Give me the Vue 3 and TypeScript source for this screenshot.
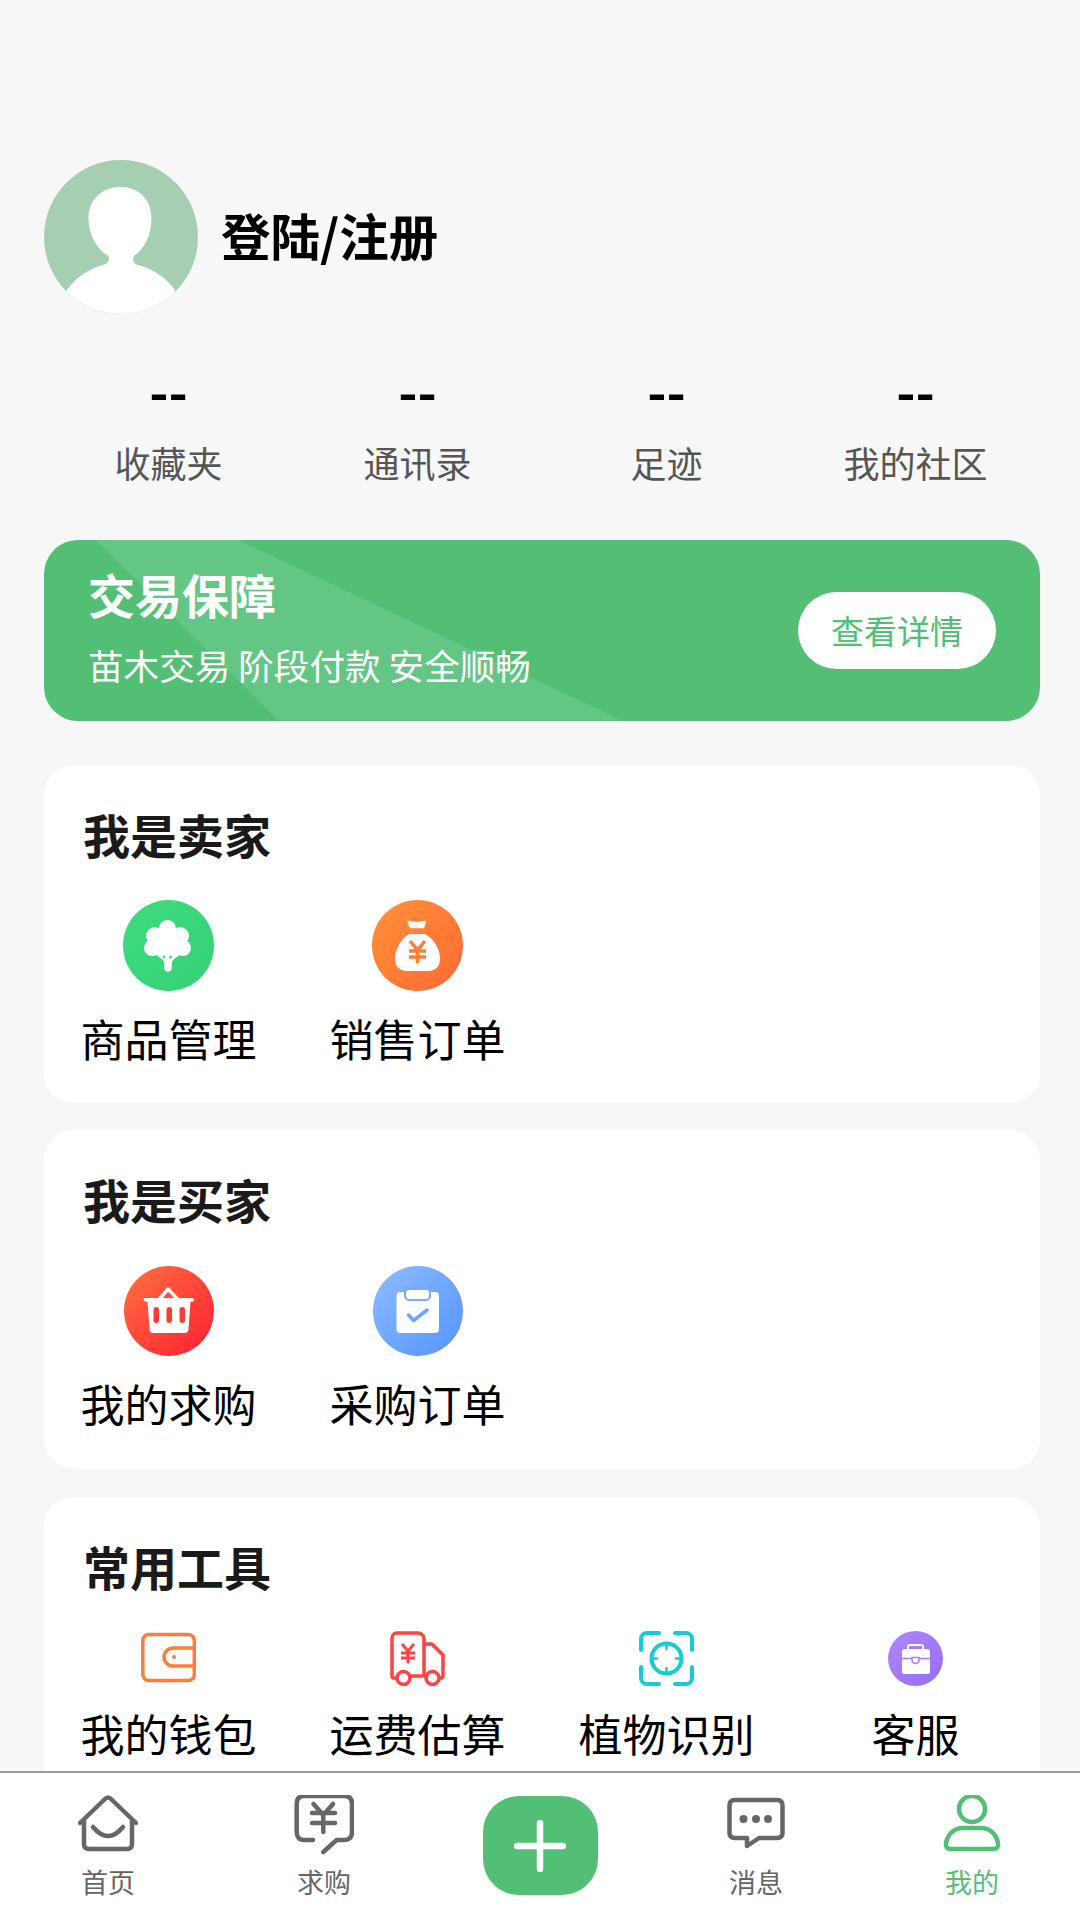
<script setup lang="ts">
const stats: string[] = ['收藏夹', '通讯录', '足迹', '我的社区']
</script>

<template>
  <div class="page">
    <main class="content">
      <section class="profile">
        <div class="avatar">
          <svg width="154" height="154" viewBox="0 0 149 154" preserveAspectRatio="none">
            <path fill="#fff" d="M74 27C56 27 43 40 43 58C43 74 50 88 62 96C64 100 62 104 57 105C42 109 31 118 22 130L30 154H120L127 130C118 118 106 109 91 105C87 104 85 100 87 96C98 88 104 74 104 58C104 40 92 27 74 27Z" />
          </svg>
        </div>
        <div class="login">登陆/注册</div>
      </section>

      <section class="stats">
        <div v-for="s in stats" :key="s" class="stat">
          <div class="stat-value">--</div>
          <div class="stat-label">{{ s }}</div>
        </div>
      </section>

      <section class="banner">
        <div class="banner-text">
          <div class="banner-title">交易保障</div>
          <div class="banner-sub">苗木交易 阶段付款 安全顺畅</div>
        </div>
        <div class="banner-btn">查看详情</div>
      </section>

      <section class="card">
        <h2 class="card-title">我是卖家</h2>
        <div class="grid">
          <div class="cell">
            <svg class="icon-lg" viewBox="0 0 91 91">
              <defs><linearGradient id="g1" x1="0" y1="0" x2="1" y2="1"><stop offset="0" stop-color="#3FDB7E" /><stop offset="1" stop-color="#34D176" /></linearGradient></defs>
              <circle cx="45.5" cy="45.5" r="45.5" fill="url(#g1)" />
              <g fill="#fff">
                <circle cx="44.5" cy="28.5" r="8.5" /><circle cx="32" cy="36" r="9" /><circle cx="57" cy="36" r="9" />
                <circle cx="29" cy="48" r="8" /><circle cx="60" cy="48" r="8" /><circle cx="45" cy="44" r="14" />
                <path d="M30 52H60C56 57 50 58 49 62L48.500 70Q45 74 41.500 70L41 62C40 58 34 57 30 52Z" />
              </g>
              <circle cx="41" cy="57" r="1.500" fill="#3FDB7E" /><circle cx="47.500" cy="57" r="1.500" fill="#3FDB7E" />
            </svg>
            <div class="cell-label">商品管理</div>
          </div>
          <div class="cell">
            <svg class="icon-lg" viewBox="0 0 91 91">
              <defs><linearGradient id="g2" x1="0" y1="0" x2="1" y2="1"><stop offset="0" stop-color="#FF9138" /><stop offset="1" stop-color="#FF6A33" /></linearGradient></defs>
              <circle cx="45.500" cy="45.500" r="45.500" fill="url(#g2)" />
              <path fill="#fff" stroke="#fff" stroke-width="1.500" stroke-linejoin="round" d="M36 21.500Q45 23.500 53.500 21.500L51.500 27.500H38.500Z" />
              <path fill="#fff" d="M37 34H53C62 39 68 49 68 59C68 67 63 71 56 71H35C28 71 23 67 23 59C23 49 29 39 37 34Z" />
              <path fill="none" stroke="#FF7C35" stroke-width="3.500" d="M38 41L45.500 50L53 41M37 51H54M37 57H54M45.500 50V63" />
            </svg>
            <div class="cell-label">销售订单</div>
          </div>
        </div>
      </section>

      <section class="card card-buyer">
        <h2 class="card-title">我是买家</h2>
        <div class="grid">
          <div class="cell">
            <svg class="icon-lg" viewBox="0 0 91 91">
              <defs><linearGradient id="g3" x1="0" y1="0" x2="1" y2="1"><stop offset="0" stop-color="#FF7040" /><stop offset="1" stop-color="#FF1F33" /></linearGradient></defs>
              <circle cx="46" cy="45" r="45" fill="url(#g3)" />
              <path fill="none" stroke="#fff" stroke-width="3.500" stroke-linejoin="round" d="M36.500 33L45 23L54.500 33" />
              <path fill="#fff" d="M21.500 32H69.500Q71.500 32 70.500 35.500H67.500L65.500 63Q65.500 67 61.500 67H30.500Q26.500 67 26.500 63L24.500 35.500H21.500Q19.500 32 21.500 32Z" />
              <g fill="#FF3A36"><rect x="30.500" y="41" width="5.500" height="16" rx="2.700" /><rect x="43.500" y="41" width="5.500" height="16" rx="2.700" /><rect x="56.500" y="41" width="5.500" height="16" rx="2.700" /></g>
            </svg>
            <div class="cell-label">我的求购</div>
          </div>
          <div class="cell">
            <svg class="icon-lg" viewBox="0 0 91 91">
              <defs><linearGradient id="g4" x1="0" y1="0" x2="1" y2="1"><stop offset="0" stop-color="#8FBCFF" /><stop offset="1" stop-color="#5294FF" /></linearGradient></defs>
              <circle cx="46" cy="45" r="45" fill="url(#g4)" />
              <rect x="24.500" y="26" width="42.500" height="41" rx="4" fill="#fff" />
              <rect x="33" y="23" width="25" height="11" rx="4" fill="#fff" stroke="#76ABFF" stroke-width="2" />
              <path fill="none" stroke="#6EA6FF" stroke-width="3.500" stroke-linecap="round" stroke-linejoin="round" d="M36.500 49L41.500 54.500L55 44" />
            </svg>
            <div class="cell-label">采购订单</div>
          </div>
        </div>
      </section>

      <section class="card card-last">
        <h2 class="card-title">常用工具</h2>
        <div class="grid">
          <div class="cell">
            <svg class="icon-sm" viewBox="0 0 55 55">
              <g fill="none" stroke="#FF7D3C" stroke-width="3.500">
                <rect x="1.800" y="3.500" width="51.500" height="46" rx="6" />
                <path d="M53 17H32A9 9 0 0 0 32 35H53" />
              </g>
              <circle cx="33" cy="26" r="2" fill="#FF7D3C" />
            </svg>
            <div class="cell-label">我的钱包</div>
          </div>
          <div class="cell">
            <svg class="icon-sm" viewBox="0 0 55 55">
              <g fill="none" stroke="#FF4343" stroke-width="3.500" stroke-linejoin="round">
                <path d="M7 47H3A2 2 0 0 1 2 45V7A5 5 0 0 1 7 2H28A6 6 0 0 1 34 8V45H20" />
                <path d="M34 13H42L53 24V45L52 47H49" />
                <path d="M34 45H36" />
                <circle cx="13.500" cy="47" r="6.500" /><circle cx="42.500" cy="47" r="6.500" />
                <path stroke-width="3" d="M12 13L18 20L24 13M11 22H25M11 27H25M18 20V32" />
              </g>
            </svg>
            <div class="cell-label">运费估算</div>
          </div>
          <div class="cell">
            <svg class="icon-sm" viewBox="0 0 55 55">
              <g fill="none" stroke="#17CCD1" stroke-width="4" stroke-linecap="round">
                <path d="M2 19V8A6 6 0 0 1 8 2H20M36 2H47A6 6 0 0 1 53 8V19M53 36V47A6 6 0 0 1 47 53H36M20 53H8A6 6 0 0 1 2 47V36" />
                <circle cx="27.500" cy="27.500" r="15" />
                <path stroke-width="2.500" d="M27.500 13V18M27.500 37V42M13 27.500H18M37 27.500H42" />
              </g>
            </svg>
            <div class="cell-label">植物识别</div>
          </div>
          <div class="cell">
            <svg class="icon-sm" viewBox="0 0 55 55">
              <defs><linearGradient id="g5" x1="0" y1="0" x2="1" y2="1"><stop offset="0" stop-color="#AF88FF" /><stop offset="1" stop-color="#966BF6" /></linearGradient></defs>
              <circle cx="27.500" cy="27.500" r="27.500" fill="url(#g5)" />
              <path fill="none" stroke="#fff" stroke-width="2" d="M20 18V16A2 2 0 0 1 22 14H33A2 2 0 0 1 35 16V18" />
              <rect x="14" y="18" width="28" height="25" rx="2.500" fill="#fff" />
              <path fill="none" stroke="#A67DFC" stroke-width="1.500" d="M14 27.500H24M31 27.500H42M24 26.500V29A3.500 3.500 0 0 0 31 29V26.500Z" />
            </svg>
            <div class="cell-label">客服</div>
          </div>
        </div>
      </section>
    </main>

    <nav class="tabbar">
      <div class="tab">
        <svg class="tab-icon" viewBox="0 0 60 60">
          <g fill="none" stroke="#666" stroke-width="4.500" stroke-linecap="round" stroke-linejoin="round">
            <path d="M2 28L27.500 3.500Q30 1.500 32.500 3.500L58 28" />
            <path d="M6 26V49Q6 54 11 54H49Q54 54 54 49V26" />
            <path d="M15 32Q30 50 45 32" />
          </g>
        </svg>
        <span class="tab-label">首页</span>
      </div>
      <div class="tab">
        <svg class="tab-icon" viewBox="0 1 60 60">
          <g fill="none" stroke="#666" stroke-width="4.500" stroke-linecap="round" stroke-linejoin="round">
            <path d="M19 46H10Q2.700 46 2.700 38V10Q2.700 2 10 2H50Q58 2 58 10V38Q58 46 50 46H42.700L29.300 58" />
            <path d="M19.500 10L29.300 21L39 10M18 19H41M18 29H41M29.300 21V38" />
          </g>
        </svg>
        <span class="tab-label">求购</span>
      </div>
      <div class="tab">
        <div class="add">
          <svg width="52" height="52" viewBox="0 0 52 52">
            <path fill="none" stroke="#fff" stroke-width="6.500" stroke-linecap="round" d="M26 3V49M3 26H49" />
          </svg>
        </div>
      </div>
      <div class="tab">
        <svg class="tab-icon" viewBox="0 0 60 60">
          <path fill="none" stroke="#666" stroke-width="4.500" stroke-linejoin="round" d="M9 5H51Q56.500 5 56.500 10.500V38Q56.500 43 51 43H33L21 51V43H9Q3.500 43 3.500 38V10.500Q3.500 5 9 5Z" />
          <g fill="#666"><circle cx="17.500" cy="24" r="4" /><circle cx="30" cy="24" r="4" /><circle cx="42" cy="24" r="4" /></g>
        </svg>
        <span class="tab-label">消息</span>
      </div>
      <div class="tab">
        <svg class="tab-icon" viewBox="0 0 60 60">
          <g fill="none" stroke="#52BF75" stroke-width="4.500">
            <circle cx="30" cy="14" r="13" />
            <path d="M9 54H51Q57 54 56 48C54 38 47 33 39 33H21C13 33 6 38 4 48Q3 54 9 54Z" />
          </g>
        </svg>
        <span class="tab-label active">我的</span>
      </div>
    </nav>
  </div>
</template>

<style>
html, body { margin: 0; padding: 0; background: #f7f7f7; }
</style>

<style scoped>
.page {
  width: 1080px;
  height: 1920px;
  display: flex;
  flex-direction: column;
  overflow: hidden;
  background: #f7f7f7;
  font-family: "Noto Sans CJK SC", "Noto Sans", sans-serif;
}
.content {
  flex: 1;
  min-height: 0;
  overflow: hidden;
  padding: 160px 40px 0 44px;
}
.profile {
  display: flex;
  align-items: center;
  gap: 23px;
}
.avatar {
  width: 154px;
  height: 154px;
  border-radius: 50%;
  background: #a5ceb3;
  overflow: hidden;
  flex: none;
}
.avatar svg { display: block; }
.login {
  font-size: 49.5px;
  font-weight: 700;
  color: #000;
  line-height: 60px;
  padding-bottom: 5px;
}
.stats {
  display: grid;
  grid-template-columns: repeat(4, 1fr);
  margin-top: 48px;
}
.stat {
  display: flex;
  flex-direction: column;
  align-items: center;
}
.stat-value {
  font-size: 52px;
  font-weight: 700;
  color: #000;
  line-height: 56px;
}
.stat-label {
  font-size: 36px;
  color: #555;
  line-height: 50px;
  margin-top: 19px;
}
.banner {
  position: relative;
  overflow: hidden;
  margin-top: 53px;
  height: 181px;
  border-radius: 34px;
  background: #52bf75;
  display: flex;
  align-items: center;
  justify-content: space-between;
  padding: 0 44px 0 44px;
  box-sizing: border-box;
}
.banner::before {
  content: "";
  position: absolute;
  inset: 0;
  background: #64c685;
  clip-path: polygon(52px 0, 194px 0, 579px 181px, 235px 181px);
}
.banner-text, .banner-btn { position: relative; }
.banner-text { padding-bottom: 8px; }
.banner-title {
  font-size: 47px;
  font-weight: 700;
  color: #fff;
  line-height: 58px;
}
.banner-sub {
  font-size: 35.6px;
  color: #fff;
  line-height: 48px;
  margin-top: 18px;
}
.banner-btn {
  width: 198px;
  height: 77px;
  border-radius: 39px;
  background: #fff;
  color: #52bf75;
  font-size: 33px;
  line-height: 77px;
  text-align: center;
}
.card {
  margin-top: 27px;
  height: 339px;
  box-sizing: border-box;
  background: #fff;
  border-radius: 30px;
  padding-top: 42px;
}
.banner + .card { margin-top: 44px; height: 338px; }
.card-last { height: 360px; margin-top: 28px; }
.card-title {
  margin: 0;
  padding-left: 39px;
  font-size: 47px;
  font-weight: 700;
  color: #1a1a1a;
  line-height: 54px;
}
.grid {
  display: grid;
  grid-template-columns: repeat(4, 1fr);
  margin-top: 39px;
}
.card-buyer .grid { margin-top: 40px; }
.card-buyer .cell-label { margin-top: 16px; }
.card-last .grid { margin-top: 38px; }
.cell {
  display: flex;
  flex-direction: column;
  align-items: center;
}
.icon-lg { width: 91px; height: 91px; display: block; }
.icon-sm { width: 55px; height: 55px; display: block; }
.cell-label {
  margin-top: 17px;
  font-size: 44px;
  color: #000;
  line-height: 60px;
  white-space: nowrap;
}
.tabbar {
  flex: none;
  height: 149px;
  box-sizing: border-box;
  border-top: 2px solid #999;
  background: #fff;
  display: grid;
  grid-template-columns: repeat(5, 216px);
}
.tab {
  display: flex;
  flex-direction: column;
  align-items: center;
  padding-top: 22px;
}
.tab-icon { width: 60px; height: 60px; display: block; }
.tab-label {
  font-size: 27px;
  color: #666;
  line-height: 40px;
  margin-top: 7px;
}
.tab-label.active { color: #52bf75; }
.add {
  width: 115px;
  height: 99px;
  margin-top: 1px;
  border-radius: 36px;
  background: #52bf75;
  display: flex;
  align-items: center;
  justify-content: center;
}
</style>
